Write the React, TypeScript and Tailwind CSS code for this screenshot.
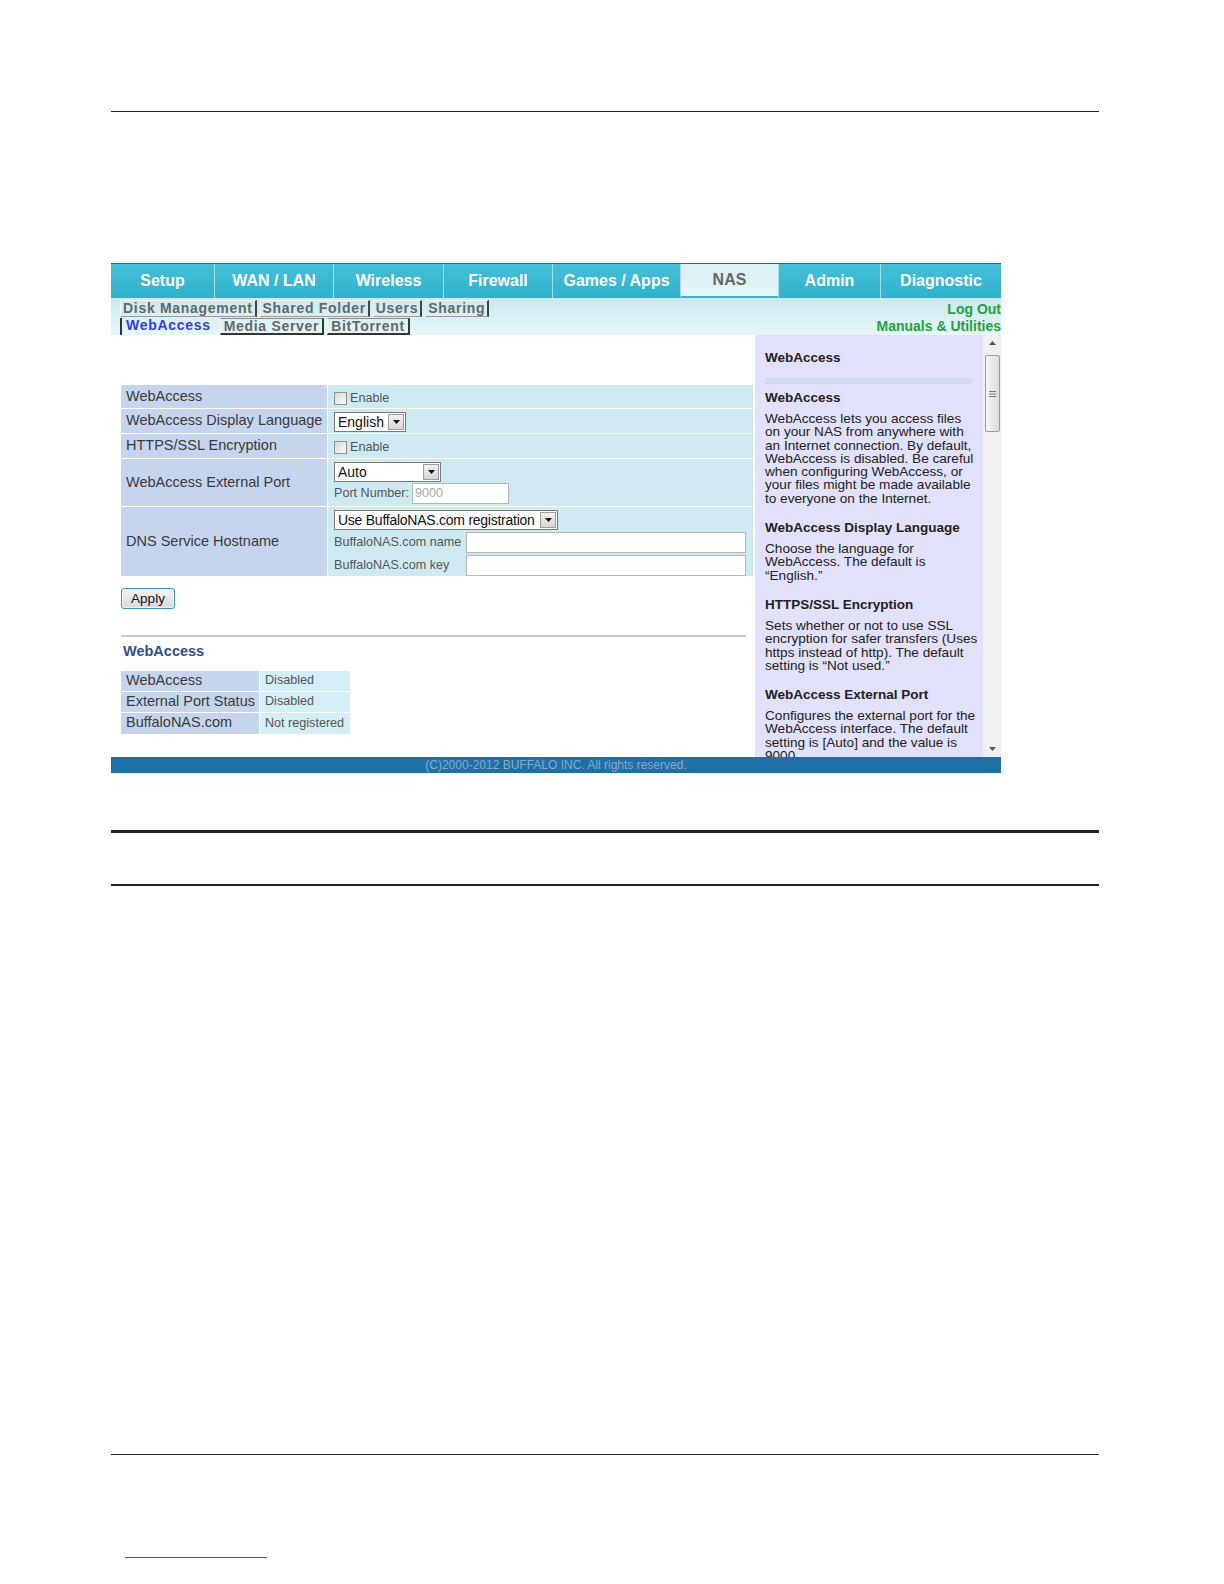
import React from "react";

const tabs = [
  { label: "Setup", w: "w-[103px]", active: false },
  { label: "WAN / LAN", w: "w-[119px]", active: false },
  { label: "Wireless", w: "w-[110px]", active: false },
  { label: "Firewall", w: "w-[109px]", active: false },
  { label: "Games / Apps", w: "w-[128px]", active: false },
  { label: "NAS", w: "w-[98px]", active: true },
  { label: "Admin", w: "w-[102px]", active: false },
  { label: "Diagnostic", w: "w-[121px]", active: false },
];

const help = [
  {
    title: "WebAccess",
    lines: [
      "WebAccess lets you access files",
      "on your NAS from anywhere with",
      "an Internet connection. By default,",
      "WebAccess is disabled. Be careful",
      "when configuring WebAccess, or",
      "your files might be made available",
      "to everyone on the Internet.",
    ],
  },
  {
    title: "WebAccess Display Language",
    lines: ["Choose the language for", "WebAccess. The default is", "\u201CEnglish.\u201D"],
  },
  {
    title: "HTTPS/SSL Encryption",
    lines: [
      "Sets whether or not to use SSL",
      "encryption for safer transfers (Uses",
      "https instead of http). The default",
      "setting is \u201CNot used.\u201D",
    ],
  },
  {
    title: "WebAccess External Port",
    lines: [
      "Configures the external port for the",
      "WebAccess interface. The default",
      "setting is [Auto] and the value is",
      "9000",
    ],
  },
];

function Checkbox() {
  return (
    <div className="flex items-center gap-[3px] pt-[4px]">
      <span className="w-[13px] h-[13px] border border-[#8f8f8f] bg-linear-to-br from-[#d8d8d8] to-[#fbfbfb]" />
      <span className="text-[12.6px] text-[#555]">Enable</span>
    </div>
  );
}

function Select({
  value,
  w,
  h,
  tight = false,
}: {
  value: string;
  w: string;
  h: string;
  tight?: boolean;
}) {
  return (
    <div className={`${w} ${h} flex items-stretch bg-white border border-[#7a7a7a]`}>
      <span
        className={`flex-1 pl-[3px] text-[14px] leading-[18px] text-[#111] whitespace-nowrap overflow-hidden ${
          tight ? "tracking-[-0.25px]" : ""
        }`}
      >
        {value}
      </span>
      <span className="w-[16px] m-px flex items-center justify-center border border-[#9c9c9c] bg-linear-to-b from-[#f2f2f2] to-[#d6d6d6]">
        <svg width="7" height="4" viewBox="0 0 7 4">
          <path d="M0 0h7L3.5 4z" fill="#111" />
        </svg>
      </span>
    </div>
  );
}

function TextBox({ w, value }: { w: string; value?: string }) {
  return (
    <div className={`${w} h-[21px] bg-white border border-[#b5b5b5] pl-[2px] text-[12.6px] leading-[19px] text-[#a8a8a8]`}>
      {value}
    </div>
  );
}

function FormRow({
  label,
  h,
  children,
}: {
  label: string;
  h: string;
  children: React.ReactNode;
}) {
  return (
    <div className={`flex gap-px ${h}`}>
      <div className="w-[206px] bg-[#c6d5ee] flex items-center pl-[5px] text-[14.5px] text-[#3a3a3a] whitespace-nowrap">
        {label}
      </div>
      <div className="flex-1 bg-[#cdeaf2] pl-[6px]">{children}</div>
    </div>
  );
}

function StatusRow({ label, value, h }: { label: string; value: string; h: string }) {
  return (
    <div className={`flex gap-px ${h}`}>
      <div className="w-[138px] bg-[#c6d5ee] flex items-center pl-[5px] text-[14.5px] text-[#3a3a3a] whitespace-nowrap">
        {label}
      </div>
      <div className="w-[90px] bg-[#d3eef6] flex items-center pl-[5px] text-[12.6px] text-[#555] whitespace-nowrap">
        {value}
      </div>
    </div>
  );
}

function Scrollbar() {
  return (
    <div className="w-[18px] bg-[#f0f0f0] flex flex-col items-center">
      <div className="h-[16px] flex items-center justify-center">
        <svg width="7" height="4" viewBox="0 0 7 4">
          <path d="M0 4h7L3.5 0z" fill="#555" />
        </svg>
      </div>
      <div className="mt-[4px] w-[15px] h-[77px] rounded-[2px] border border-[#9b9b9b] bg-linear-to-r from-[#f6f6f6] to-[#dcdcdc] flex items-center justify-center">
        <svg width="7" height="6" viewBox="0 0 7 6">
          <path d="M0 0.5h7M0 3h7M0 5.5h7" stroke="#777" strokeWidth="1" />
        </svg>
      </div>
      <div className="flex-1" />
      <div className="h-[16px] flex items-center justify-center">
        <svg width="7" height="4" viewBox="0 0 7 4">
          <path d="M0 0h7L3.5 4z" fill="#555" />
        </svg>
      </div>
    </div>
  );
}

function RouterScreen() {
  return (
    <div className="w-[890px] h-[510px] flex flex-col font-['Liberation_Sans',Arial,sans-serif] overflow-hidden">
      {/* main tabs */}
      <div className="h-[35px] border-t border-[#2a6a86] flex">
        {tabs.map((t, i) => (
          <div
            key={t.label}
            className={`${t.w} h-full flex items-center justify-center text-[16px] font-bold ${
              i > 0 ? "border-l border-[#a7dde8]" : ""
            } ${
              t.active
                ? "bg-linear-to-b from-[#dbeff4] to-[#e6f5f8] text-[#666] border-b-2 border-b-[#3cb4cc]"
                : "bg-linear-to-b from-[#46bfd8] to-[#2fb1cc] text-white"
            }`}
          >
            {t.label}
          </div>
        ))}
      </div>

      {/* sub navigation */}
      <div className="h-[37px] bg-linear-to-b from-[#c8eaf0] to-[#e6f7f9] flex justify-between pt-[2px]">
        <div className="flex flex-col gap-px pl-[9px]">
          <div className="flex gap-[3px] h-[17px] items-stretch text-[14px] font-bold text-[#666] leading-[15px] tracking-[0.7px]">
            {["Disk Management", "Shared Folder", "Users", "Sharing"].map((s) => (
              <span key={s} className="px-[2px] border-r-2 border-b border-r-[#444] border-b-[#9a9a9a] border-t border-t-[#f2f2f2] border-l border-l-[#f2f2f2] whitespace-nowrap">
                {s}
              </span>
            ))}
          </div>
          <div className="flex gap-[3px] h-[17px] items-stretch text-[14px] font-bold leading-[15px] tracking-[0.7px]">
            <span className="pl-[4px] pr-[6px] border-l-2 border-[#333] text-[#3838ee] whitespace-nowrap">
              WebAccess
            </span>
            {["Media Server", "BitTorrent"].map((s) => (
              <span key={s} className="px-[3px] text-[#666] border-t border-t-[#8a8a8a] border-r-2 border-r-[#333] border-b-2 border-b-[#333] border-l border-l-[#f2f2f2] whitespace-nowrap">
                {s}
              </span>
            ))}
          </div>
        </div>
        <div className="flex flex-col items-end text-[14px] font-bold text-[#26a03a] leading-[17px] pt-px">
          <span>Log Out</span>
          <span>Manuals &amp; Utilities</span>
        </div>
      </div>

      {/* body */}
      <div className="h-[422px] flex">
        <div className="w-[644px] bg-white pl-[10px] pt-[50px]">
          <div className="w-[632px] flex flex-col gap-px">
            <FormRow label="WebAccess" h="h-[23px]">
              <Checkbox />
            </FormRow>
            <FormRow label="WebAccess Display Language" h="h-[24px]">
              <div className="pt-[3px]">
                <Select value="English" w="w-[72px]" h="h-[20px]" />
              </div>
            </FormRow>
            <FormRow label="HTTPS/SSL Encryption" h="h-[24px]">
              <Checkbox />
            </FormRow>
            <FormRow label="WebAccess External Port" h="h-[47px]">
              <div className="pt-[3px] flex flex-col gap-px">
                <Select value="Auto" w="w-[107px]" h="h-[20px]" />
                <div className="flex items-center gap-[3px]">
                  <span className="text-[12.6px] text-[#555] whitespace-nowrap">Port Number:</span>
                  <TextBox w="w-[97px]" value="9000" />
                </div>
              </div>
            </FormRow>
            <FormRow label="DNS Service Hostname" h="h-[69px]">
              <div className="pt-[3px] flex flex-col gap-[2px]">
                <Select value="Use BuffaloNAS.com registration" w="w-[224px]" h="h-[20px]" tight />
                <div className="flex items-center">
                  <span className="w-[132px] text-[12.6px] text-[#555] whitespace-nowrap">BuffaloNAS.com name</span>
                  <TextBox w="w-[280px]" />
                </div>
                <div className="flex items-center">
                  <span className="w-[132px] text-[12.6px] text-[#555] whitespace-nowrap">BuffaloNAS.com key</span>
                  <TextBox w="w-[280px]" />
                </div>
              </div>
            </FormRow>
          </div>

          <button className="mt-[12px] w-[54px] h-[21px] rounded-[3px] border border-[#3d8fc4] bg-linear-to-b from-[#f4f4f4] to-[#d9d9d9] text-[13.5px] text-[#111] leading-[18px] shadow-[inset_0_0_0_1px_#e9f3fa]">
            Apply
          </button>

          <div className="mt-[25px] w-[625px] h-[2px] bg-[#c9c9c9]" />

          <div className="mt-[6px] pl-[2px] h-[16px] text-[14.5px] font-bold text-[#2c4f8e] leading-[16px]">
            WebAccess
          </div>

          <div className="mt-[12px] flex flex-col gap-px">
            <StatusRow label="WebAccess" value="Disabled" h="h-[20px]" />
            <StatusRow label="External Port Status" value="Disabled" h="h-[20px]" />
            <StatusRow label="BuffaloNAS.com" value="Not registered" h="h-[21px]" />
          </div>
        </div>

        <div className="w-[228px] bg-[#e1e1fb] pl-[10px] pr-[6px] pt-[15px] overflow-hidden">
          <div className="h-[16px] text-[13.5px] font-bold text-[#222] leading-[16px]">WebAccess</div>
          <div className="mt-[12px] h-[6px] w-[207px] bg-[#d0daf1]" />
          <div className="mt-[6px]">
            {help.map((s) => (
              <div key={s.title} className="mb-[15px]">
                <div className="h-[16px] text-[13.5px] font-bold text-[#222] leading-[16px] whitespace-nowrap">
                  {s.title}
                </div>
                <div className="mt-[6px] text-[13.6px] text-[#222] leading-[13.3px]">
                  {s.lines.map((l) => (
                    <div key={l} className="whitespace-nowrap">
                      {l}
                    </div>
                  ))}
                </div>
              </div>
            ))}
          </div>
        </div>

        <Scrollbar />
      </div>

      {/* footer */}
      <div className="h-[16px] bg-[#2070a8] text-center text-[12px] leading-[16px] text-[#88a9c9]">
        (C)2000-2012 BUFFALO INC. All rights reserved.
      </div>
    </div>
  );
}

export default function App() {
  return (
    <div className="w-[1224px] h-[1584px] bg-white flex flex-col pl-[111px] font-['Liberation_Sans',Arial,sans-serif]">
      <div className="mt-[111px] w-[988px] h-px bg-[#222]" />
      <div className="mt-[151px]">
        <RouterScreen />
      </div>
      <div className="mt-[57px] w-[988px] h-[3px] bg-[#222]" />
      <div className="mt-[51px] w-[988px] h-[2px] bg-[#222]" />
      <div className="mt-[568px] w-[988px] h-px bg-[#222]" />
      <div className="mt-[102px] ml-[14px] w-[142px] h-px bg-[#3f4f9a]" />
    </div>
  );
}
